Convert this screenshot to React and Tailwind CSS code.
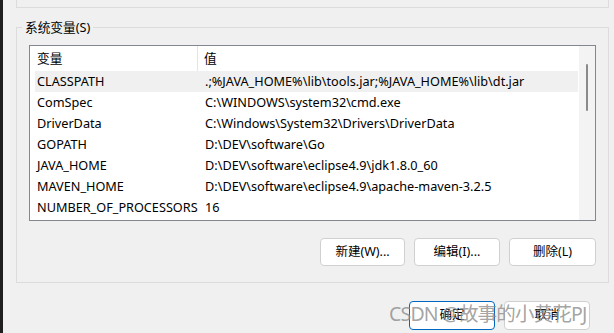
const rows = [
  ["CLASSPATH", ".;%JAVA_HOME%\\lib\\tools.jar;%JAVA_HOME%\\lib\\dt.jar"],
  ["ComSpec", "C:\\WINDOWS\\system32\\cmd.exe"],
  ["DriverData", "C:\\Windows\\System32\\Drivers\\DriverData"],
  ["GOPATH", "D:\\DEV\\software\\Go"],
  ["JAVA_HOME", "D:\\DEV\\software\\eclipse4.9\\jdk1.8.0_60"],
  ["MAVEN_HOME", "D:\\DEV\\software\\eclipse4.9\\apache-maven-3.2.5"],
  ["NUMBER_OF_PROCESSORS", "16"],
];

function Button({ children, primary, className = "" }) {
  return (
    <div
      className={
        "flex items-center justify-center rounded-[4px] bg-white text-[12.5px] text-black " +
        (primary ? "border border-[#0067c0] " : "border border-[#d0d0d0] ") +
        className
      }
    >
      {children}
    </div>
  );
}

export default function App() {
  return (
    <div
      className="relative flex h-[333px] w-[614px] overflow-hidden bg-[#f0f0f0] text-[12.7px] text-black"
      style={{ fontFamily: '"Noto Sans", "Noto Sans CJK SC", sans-serif' }}
    >
      {/* window edge */}
      <div className="h-full w-[3px] bg-[#1f1f1f]" />

      <div className="flex flex-1 flex-col">
        {/* bottom of the user variables group */}
        <div className="ml-[13px] h-[8px] w-[593px] border-x border-b border-[#dcdcdc]" />

        {/* system variables group */}
        <div className="relative ml-[13px] mt-[19px] h-[256px] w-[593px] border border-[#dcdcdc] px-[12px] pt-[17px]">
          <span className="absolute left-[5px] top-[-10px] bg-[#f0f0f0] px-[3px] leading-[18px]">
            系统变量(S)
          </span>

          {/* list view */}
          <div className="flex h-[176px] w-[567px] border border-[#828790] bg-white">
            <div className="flex flex-1 flex-col overflow-hidden">
              <div className="flex h-[25px] items-center">
                <div className="flex h-full w-[168px] items-center border-r border-[#e5e5e5] pl-[7px]">
                  变量
                </div>
                <div className="pl-[6px]">值</div>
              </div>
              {rows.map(([name, value], i) => (
                <div
                  key={name}
                  className={
                    "flex h-[21px] items-center " +
                    (i === 0 ? "ml-[5px] bg-[#f0f0f0]" : "")
                  }
                >
                  <div className={"whitespace-nowrap " + (i === 0 ? "w-[170px] pl-[2px]" : "w-[175px] pl-[7px]")}>
                    {name}
                  </div>
                  <div className="whitespace-nowrap">{value}</div>
                </div>
              ))}
            </div>
            {/* scrollbar */}
            <div className="w-[17px] border-l border-white bg-[#f3f3f3] pl-[7px] pt-[18px]">
              <div className="h-[47px] w-[2px] rounded-full bg-[#8a8a8a]" />
            </div>
          </div>

          <div className="mt-[17px] flex w-[567px] justify-end gap-[9px]">
            <Button className="h-[28px] w-[85px]">新建(W)...</Button>
            <Button className="h-[28px] w-[86px]">编辑(I)...</Button>
            <Button className="h-[28px] w-[87px]">删除(L)</Button>
          </div>
        </div>

        {/* dialog buttons */}
        <div className="mt-[18px] flex justify-end gap-[9px] pr-[24px]">
          <Button primary className="h-[29px] w-[86px]">确定</Button>
          <Button className="h-[29px] w-[86px]">取消</Button>
        </div>
      </div>

      {/* watermark */}
      <span className="pointer-events-none absolute left-[389px] top-[300px] whitespace-nowrap text-[19.5px] leading-[28px] tracking-[-0.8px] text-[#8c8c8c]/80">
        CSDN @故事的小黄花PJ
      </span>
    </div>
  );
}
